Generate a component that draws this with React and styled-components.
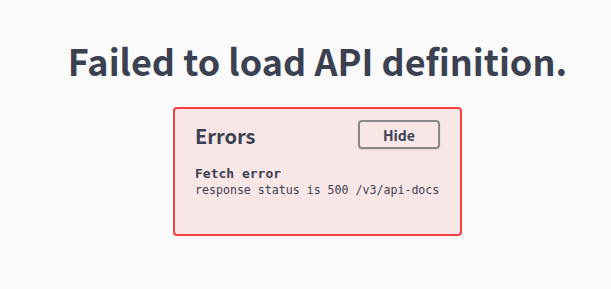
import styled, { createGlobalStyle } from 'styled-components';

const GlobalStyle = createGlobalStyle`
  html, body {
    margin: 0;
    padding: 0;
    background: #fafafa;
  }
  body {
    font-family: "Noto Sans CJK KR", "Noto Sans", sans-serif;
  }
`;

const Page = styled.div`
  min-height: 289px;
  padding: 0 0 0 24px;
  box-sizing: border-box;
  display: flex;
  flex-direction: column;
  align-items: center;
`;

const Title = styled.h4`
  margin: 39px 0 0;
  font-size: 36px;
  line-height: 1.2;
  font-weight: 700;
  color: #3b4151;
  font-family: "Noto Sans CJK KR", "Noto Sans", sans-serif;
`;

const ErrorsWrapper = styled.div`
  margin-top: 25px;
  width: 289px;
  box-sizing: border-box;
  padding: 10px 20px 35px;
  border: 2px solid #f93e3e;
  border-radius: 4px;
  background: rgba(249, 62, 62, 0.1);
`;

const Header = styled.div`
  display: flex;
  align-items: center;
`;

const HeaderTitle = styled.h4`
  flex: 1;
  margin: 2px 0 0;
  font-size: 20px;
  font-weight: 700;
  color: #3b4151;
  font-family: "Noto Sans CJK KR", "Noto Sans", sans-serif;
`;

const Button = styled.button`
  width: 82px;
  height: 29px;
  padding: 0;
  border: 2px solid #888;
  border-radius: 4px;
  background: transparent;
  box-shadow: 0 1px 2px rgba(0, 0, 0, 0.1);
  font-size: 14px;
  font-weight: 700;
  color: #3b4151;
  font-family: "Noto Sans CJK KR", "Noto Sans", sans-serif;
  cursor: pointer;
`;

const ErrorItem = styled.div`
  margin-top: 16px;
  font-family: "DejaVu Sans Mono", "Liberation Mono", monospace;
  color: #3b4151;
`;

const ErrorName = styled.h4`
  margin: 0;
  font-size: 13px;
  line-height: 16px;
  font-weight: 700;
`;

const ErrorMessage = styled.span`
  display: block;
  font-size: 11.6px;
  line-height: 17px;
  white-space: pre-line;
`;

export default function App() {
  return (
    <>
      <GlobalStyle />
      <Page>
        <Title>Failed to load API definition.</Title>
        <ErrorsWrapper>
          <Header>
            <HeaderTitle>Errors</HeaderTitle>
            <Button>Hide</Button>
          </Header>
          <ErrorItem>
            <ErrorName>Fetch error</ErrorName>
            <ErrorMessage>response status is 500 /v3/api-docs</ErrorMessage>
          </ErrorItem>
        </ErrorsWrapper>
      </Page>
    </>
  );
}
